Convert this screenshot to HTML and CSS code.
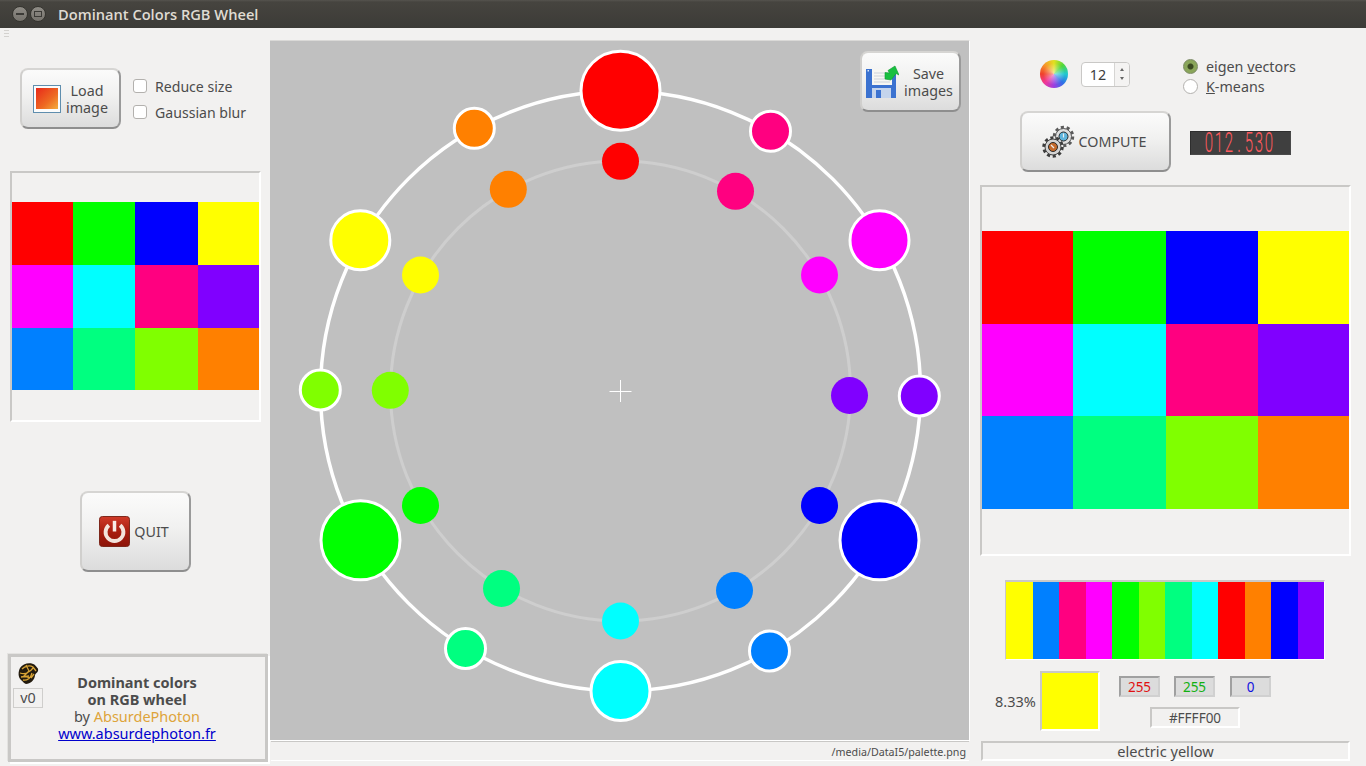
FILE: index.html
```html
<!DOCTYPE html>
<html lang="en">
<head>
<meta charset="utf-8">
<title>Dominant Colors RGB Wheel</title>
<link rel="stylesheet" href="styles.css">
</head>
<body>
<div class="app">
  <header class="titlebar">
    <span class="winbtn"><span class="glyph-min"></span></span>
    <span class="winbtn"><span class="glyph-max"></span></span>
    <span class="wintitle">Dominant Colors RGB Wheel</span>
  </header>
  <div class="grip"></div>
  <main class="main">
    <section class="left">
      <div class="load-row">
        <button class="btn btn-load">
          <svg class="ico-load" width="28" height="28" viewBox="0 0 28 28">
            <defs>
              <linearGradient id="lg" x1="0" y1="0" x2="1" y2="1"><stop offset="0" stop-color="#e8281a"/><stop offset=".6" stop-color="#ee6a22"/><stop offset="1" stop-color="#f4ae3c"/></linearGradient>
            </defs>
            <rect x=".5" y=".5" width="27" height="27" fill="#fbfbfb" stroke="#5f8eae"/>
            <rect x="3" y="3" width="22" height="21" fill="url(#lg)"/>
          </svg>
          <span class="btn-two">Load<br>image</span>
        </button>
        <div class="checks">
          <label class="check"><input type="checkbox"><span>Reduce size</span></label>
          <label class="check"><input type="checkbox"><span>Gaussian blur</span></label>
        </div>
      </div>
      <div class="frame frame-small">
        <div class="palette palette-small">
          <i class="red"></i><i class="green"></i><i class="blue"></i><i class="yellow"></i>
          <i class="magenta"></i><i class="cyan"></i><i class="rose"></i><i class="violet"></i>
          <i class="azure"></i><i class="spring"></i><i class="chart"></i><i class="orange"></i>
        </div>
      </div>
      <button class="btn btn-quit">
        <svg width="31" height="31" viewBox="0 0 32 32">
          <defs>
            <linearGradient id="qg" x1="0" y1="0" x2="0" y2="1"><stop offset="0" stop-color="#d03a28"/><stop offset=".5" stop-color="#a81e10"/><stop offset="1" stop-color="#8c1408"/></linearGradient>
          </defs>
          <rect x=".5" y=".5" width="31" height="31" rx="3" fill="url(#qg)" stroke="#7a2418"/>
          <path d="M10.200 9.500A9.200 9.200 0 1 0 21.800 9.500" fill="none" stroke="#f3e4dc" stroke-width="4"/>
          <path d="M16 5v11" stroke="#f8eee8" stroke-width="3.600"/>
        </svg>
        <span>QUIT</span>
      </button>
      <div class="about">
        <div class="badge">
          <svg width="22" height="24" viewBox="0 0 22 24">
            <path d="M3 6C6 1 14 0 18 3c1 2 4 3 3 6-1 2-2 2-3 4 0 5-5 9-9 9-3-1-3-3-5-4-3-3-3-8-1-12z" fill="#231b0e"/>
            <path d="M5 7c3-3 8-4 11-2l3 4M3 11c5 2 10-1 13-5M6 18c4 1 8-2 9-7M9 3l3 6-5 5 6 2M4 15l8-1M14 16l3-4" fill="none" stroke="#d9a435" stroke-width="1.300"/>
          </svg>
          <span class="version">v0</span>
        </div>
        <div class="about-text">
          <strong>Dominant colors<br>on RGB wheel</strong><br>
          by <span class="gold">AbsurdePhoton</span><br>
          <a href="#" class="site">www.absurdephoton.fr</a>
        </div>
      </div>
    </section>

    <section class="center">
      <div class="canvas">
        <svg class="wheel" width="700" height="699" viewBox="270 41 700 699">
          <circle class="ring-inner" cx="620.5" cy="391" r="230"/>
          <circle class="ring-outer" cx="620.5" cy="391" r="300"/>
          <path class="cross" d="M620.5 380v22M609.5 391.500h22"/>
          <g class="dots-outer">
            <circle class="s-red" cx="620.500" cy="90.700" r="39.500"/>
            <circle class="s-orange" cx="474.300" cy="128.300" r="20"/>
            <circle class="s-yellow" cx="360.300" cy="240.300" r="29.500"/>
            <circle class="s-chart" cx="320.300" cy="390" r="20"/>
            <circle class="s-green" cx="360.500" cy="540.300" r="39.500"/>
            <circle class="s-spring" cx="465.500" cy="648.500" r="20"/>
            <circle class="s-cyan" cx="620.500" cy="691" r="29.500"/>
            <circle class="s-azure" cx="769.500" cy="651" r="20"/>
            <circle class="s-blue" cx="879.500" cy="540.300" r="39.500"/>
            <circle class="s-violet" cx="919.300" cy="396" r="20"/>
            <circle class="s-magenta" cx="879.500" cy="240.300" r="29.500"/>
            <circle class="s-rose" cx="770.500" cy="131.300" r="20"/>
          </g>
          <g class="dots-inner">
            <circle class="s-red" cx="620.500" cy="161.300" r="18.500"/>
            <circle class="s-orange" cx="508.300" cy="189.300" r="18.500"/>
            <circle class="s-yellow" cx="420.500" cy="275" r="18.500"/>
            <circle class="s-chart" cx="390.300" cy="390.300" r="18.500"/>
            <circle class="s-green" cx="420.500" cy="505.500" r="18.500"/>
            <circle class="s-spring" cx="501.500" cy="588.500" r="18.500"/>
            <circle class="s-cyan" cx="620.500" cy="621" r="18.500"/>
            <circle class="s-azure" cx="734.500" cy="590.500" r="18.500"/>
            <circle class="s-blue" cx="819.500" cy="505.500" r="18.500"/>
            <circle class="s-violet" cx="849.500" cy="395.500" r="18.500"/>
            <circle class="s-magenta" cx="819.500" cy="275" r="18.500"/>
            <circle class="s-rose" cx="735.500" cy="191.300" r="18.500"/>
          </g>
        </svg>
        <button class="btn btn-save">
          <svg width="33" height="33" viewBox="0 0 33 33">
            <path d="M0 4h26l4 4v25H0z" fill="#3b72d0"/>
            <rect x="1.500" y="5" width="1.500" height="1.500" fill="#dbe8fa"/>
            <rect x="6" y="4" width="20" height="16" fill="#f6f6f2"/>
            <path d="M8 8h16M8 11h16M8 14h16M8 17h16" stroke="#ccd2da"/>
            <rect x="6" y="23" width="19" height="10" fill="#c4d4ec"/>
            <rect x="10" y="25" width="5" height="8" fill="#3b72d0"/>
            <path d="M19 14V7.500L23.500 8 22 5.500 29 1l4 9-3-1.500-1 1.500-4 5z" fill="#18c040" stroke="#0f9a30" stroke-width=".6"/>
          </svg>
          <span class="btn-two">Save<br>images</span>
        </button>
      </div>
      <div class="status">/media/DataI5/palette.png</div>
    </section>

    <section class="right">
      <div class="opts">
        <span class="colorwheel"></span>
        <div class="spin">
          <span class="spin-val">12</span>
          <span class="spin-arrows"><span class="up"></span><span class="down"></span></span>
        </div>
        <div class="radios">
          <label class="radio"><input type="radio" name="m" checked><span>eigen <u>v</u>ectors</span></label>
          <label class="radio"><input type="radio" name="m"><span><u>K</u>-means</span></label>
        </div>
      </div>
      <div class="compute-row">
        <button class="btn btn-compute">
          <svg width="33" height="33" viewBox="0 0 33 33">
            <g fill="none">
              <circle cx="21.500" cy="11.500" r="9" stroke="#5a5a5a" stroke-width="3.500" stroke-dasharray="3 2.650"/>
              <circle cx="21.500" cy="11.500" r="8" fill="#dedede" stroke="#555"/>
              <circle cx="21.500" cy="11.500" r="4.500" fill="#5fb4dc" stroke="#2a2a2a"/>
              <path d="M21.500 8.500v4" stroke="#eee" stroke-width="1.200"/>
              <circle cx="11" cy="22" r="9" stroke="#3c3c3c" stroke-width="3.500" stroke-dasharray="3 2.650"/>
              <circle cx="11" cy="22" r="8" fill="#d4d4d4" stroke="#444"/>
              <circle cx="11" cy="22" r="4.500" fill="#c46a2c" stroke="#2a2a2a"/>
              <path d="M9 20l3 3" stroke="#eee" stroke-width="1.200"/>
            </g>
          </svg>
          <span>COMPUTE</span>
        </button>
        <div class="lcd"><div class="lcd-digits"><b>0</b><b>1</b><b>2</b><b>.</b><b>5</b><b>3</b><b>0</b></div></div>
      </div>
      <div class="frame frame-large">
        <div class="palette palette-large">
          <i class="red"></i><i class="green"></i><i class="blue"></i><i class="yellow"></i>
          <i class="magenta"></i><i class="cyan"></i><i class="rose"></i><i class="violet"></i>
          <i class="azure"></i><i class="spring"></i><i class="chart"></i><i class="orange"></i>
        </div>
      </div>
      <div class="strip">
        <i class="yellow"></i><i class="azure"></i><i class="rose"></i><i class="magenta"></i>
        <i class="green"></i><i class="chart"></i><i class="spring"></i><i class="cyan"></i>
        <i class="red"></i><i class="orange"></i><i class="blue"></i><i class="violet"></i>
      </div>
      <div class="detail">
        <span class="pct">8.33%</span>
        <div class="swatch yellow"></div>
        <div class="values">
          <div class="rgb">
            <span class="val val-r">255</span>
            <span class="val val-g">255</span>
            <span class="val val-b">0</span>
          </div>
          <div class="hex">#FFFF00</div>
        </div>
      </div>
      <div class="name">electric yellow</div>
    </section>
  </main>
</div>
</body>
</html>
```
FILE: styles.css
```css
* { box-sizing: border-box; }
html, body { margin: 0; padding: 0; }
body {
  width: 1366px;
  height: 766px;
  overflow: hidden;
  background: #f2f1f0;
  color: #4c4c4c;
  font-family: "Noto Sans", "Open Sans", sans-serif;
  font-size: 14.300px;
}
.app { position: relative; width: 1366px; height: 766px; }

/* title bar */
.titlebar {
  height: 28px;
  display: flex;
  align-items: center;
  padding-left: 12px;
  gap: 2px;
  background: linear-gradient(#55534e 0, #46443f 2px, #3c3b37 100%);
}
.winbtn {
  width: 16px;
  height: 16px;
  border-radius: 50%;
  background: linear-gradient(#8f8c86, #76736d);
  border: 1px solid #35342f;
  display: flex;
  align-items: center;
  justify-content: center;
}
.glyph-min { width: 8px; height: 2px; background: #3c3b37; }
.glyph-max { width: 8px; height: 6px; border: 1px solid #3c3b37; }
.wintitle {
  margin-left: 10px;
  font-family: "Open Sans", sans-serif;
  font-size: 14.650px;
  font-weight: 600;
  color: #dfdbd2;
}
.grip {
  position: absolute;
  left: 4px;
  top: 30px;
  width: 5px;
  height: 8px;
  background: repeating-linear-gradient(#d4d2cf 0 1px, transparent 1px 3px);
}

.main {
  display: grid;
  grid-template-columns: 270px 700px 396px;
  height: 738px;
}

/* buttons */
.btn {
  display: flex;
  align-items: center;
  justify-content: center;
  padding: 0;
  font: inherit;
  color: #4c4c4c;
  background: linear-gradient(#fbfbfb, #f1f1f0 45%, #dcdcdc);
  border: 2px solid;
  border-color: #d6d5d3 #9a9a9a #8e8e8e #d0cfcd;
  border-radius: 8px;
}
.btn-two { text-align: center; line-height: 17px; }

/* left */
.load-row {
  display: flex;
  align-items: center;
  margin: 40px 0 0 20px;
}
.btn-load { width: 101px; height: 61px; gap: 5px; }
.checks {
  margin: 1px 0 0 12px;
  display: flex;
  flex-direction: column;
  gap: 6px;
  font-size: 14.100px;
}
.check { display: flex; align-items: center; height: 20px; gap: 8px; }
.check input {
  appearance: none;
  width: 14px;
  height: 14px;
  margin: 0;
  background: #fff;
  border: 1px solid #b3b1ae;
  border-radius: 3px;
}
.frame {
  display: flex;
  flex-direction: column;
  justify-content: center;
  padding-bottom: 2px;
  border: 2px solid;
  border-color: #c9c8c6 #fff #fff #c9c8c6;
}
.frame-small { width: 251px; height: 251px; margin: 42px 0 0 10px; }
.frame-large { width: 371px; height: 371px; margin: 13px 0 0 10px; }
.palette { display: grid; }
.palette i, .strip i { display: block; }
.palette-small {
  grid-template-columns: 61px 62px 63px 61px;
  grid-template-rows: 63px 63px 62px;
}
.palette-large {
  grid-template-columns: 91px 93px 92px 91px;
  grid-template-rows: 93px 92px 93px;
}
.btn-quit { width: 111px; height: 81px; margin: 69px 0 0 80px; gap: 4px; padding-right: 3px; }
.about {
  position: relative;
  width: 260px;
  height: 108px;
  margin: 82px 0 0 8px;
  padding-right: 2px;
  display: flex;
  align-items: center;
  justify-content: center;
  border: 3px solid #c9c8c6;
  box-shadow: 2px 2px 0 #fff, -1px -1px 0 #e4e3e1;
}
.about-text { text-align: center; line-height: 17px; font-size: 14.500px; }
.about-text strong { font-weight: 700; }
.gold { color: #dea43a; }
.site { color: #0000cc; }
.badge {
  position: absolute;
  left: 2px;
  top: 5px;
  width: 30px;
  display: flex;
  flex-direction: column;
  align-items: center;
}
.version {
  width: 30px;
  height: 20px;
  margin-top: 2px;
  border: 1px solid #cfcecc;
  text-align: center;
  line-height: 18px;
}

/* center */
.canvas {
  position: relative;
  width: 700px;
  height: 701px;
  margin-top: 12px;
  background: #c0c0c0;
  border-top: 1px solid #dad9d7;
  border-right: 1px solid #fff;
  border-bottom: 1px solid #fff;
}
.wheel { display: block; }
.ring-inner { fill: none; stroke: #cecece; stroke-width: 3; }
.ring-outer { fill: none; stroke: #fff; stroke-width: 3.500; }
.cross { stroke: #fff; stroke-width: 1; fill: none; }
.dots-outer circle { stroke: #fff; stroke-width: 3; }
.btn-save {
  position: absolute;
  left: 590px;
  top: 10px;
  width: 101px;
  height: 61px;
  gap: 5px;
  padding-right: 2px;
}
.status {
  width: 698px;
  height: 20px;
  margin-left: 1px;
  padding-right: 3px;
  text-align: right;
  font-size: 10.700px;
  line-height: 21px;
  border-top: 1px solid #c9c8c6;
  border-bottom: 1px solid #fff;
}

/* right */
.opts {
  display: flex;
  align-items: center;
  height: 40px;
  margin-top: 26px;
  padding-left: 70px;
}
.colorwheel {
  width: 28px;
  height: 28px;
  border-radius: 50%;
  background:
    radial-gradient(circle at 50% 50%, rgba(255,255,255,.55) 0, rgba(255,255,255,0) 55%),
    conic-gradient(#e2e020, #50d83a, #20c8d0, #2f70e8, #9a3ee0, #f0389a, #f0402a, #f6982c, #e2e020);
}
.spin {
  display: flex;
  width: 49px;
  height: 25px;
  margin-left: 13px;
  background: #fff;
  border: 1px solid #c9c8c6;
  border-radius: 4px;
}
.spin-val { flex: 1; text-align: center; line-height: 23px; color: #3c3c3c; }
.spin-arrows {
  width: 15px;
  display: flex;
  flex-direction: column;
  justify-content: center;
  align-items: center;
  gap: 6px;
  background: #f4f3f2;
  border-left: 1px solid #d6d5d3;
  border-radius: 0 4px 4px 0;
}
.up { border: 2px solid transparent; border-top: 0; border-bottom: 3px solid #666; }
.down { border: 2px solid transparent; border-bottom: 0; border-top: 3px solid #666; }
.radios {
  margin: 4px 0 0 53px;
  display: flex;
  flex-direction: column;
}
.radio { display: flex; align-items: center; height: 20px; gap: 8px; }
.radio input {
  appearance: none;
  width: 15px;
  height: 15px;
  margin: 0;
  background: #fff;
  border: 1px solid #b3b1ae;
  border-radius: 50%;
}
.radio input:checked {
  background: radial-gradient(circle, #3b4a22 0 2.500px, #8aa65a 3.500px);
  border-color: #7b8a63;
}
.compute-row {
  display: flex;
  align-items: center;
  margin: 17px 0 0 50px;
}
.btn-compute { width: 151px; height: 61px; gap: 4px; padding-right: 3px; }
.lcd {
  width: 101px;
  height: 24px;
  margin: 3px 0 0 19px;
  padding-left: 13px;
  background: #3f3f3f;
  border: 1px solid;
  border-color: #2e2e2e #4a4a4a #4a4a4a #2e2e2e;
  display: flex;
  align-items: center;
}
.lcd-digits {
  display: flex;
  font-family: "Roboto", sans-serif;
  font-size: 15px;
  line-height: 12px;
  color: #ff5a5e;
  transform: scaleY(1.800);
}
.lcd-digits b {
  width: 10px;
  font-weight: 300;
  text-align: center;
}
.strip {
  display: grid;
  grid-template-columns: repeat(12, 1fr);
  width: 320px;
  height: 80px;
  margin: 24px 0 0 35px;
  border: 1px solid;
  border-width: 2px 1px 1px 1px;
  border-color: #c9c8c6 #fff #fff #c9c8c6;
}
.detail {
  display: flex;
  align-items: flex-start;
  margin: 11px 0 0 25px;
}
.pct { width: 45px; line-height: 60px; font-size: 14.500px; }
.swatch {
  width: 60px;
  height: 60px;
  border: 2px solid;
  border-color: #c9c8c6 #fff #fff #c9c8c6;
}
.values { margin: 5px 0 0 19px; }
.rgb { display: flex; gap: 14px; }
.val {
  width: 41px;
  height: 21px;
  text-align: center;
  font-size: 13.500px;
  line-height: 18px;
  background: #dcdcdc;
  border: 2px solid;
  border-color: #a0a0a0 #d0d0d0 #d0d0d0 #a0a0a0;
}
.val-r { color: #e01010; }
.val-g { color: #12b012; margin-right: 1px; }
.val-b { color: #1010e0; }
.hex {
  width: 90px;
  height: 21px;
  margin: 10px 0 0 31px;
  text-align: center;
  line-height: 18px;
  font-size: 13.500px;
  border: 2px solid;
  border-color: #c9c8c6 #fff #fff #c9c8c6;
}
.name {
  width: 369px;
  height: 20px;
  margin: 10px 0 0 11px;
  text-align: center;
  font-size: 14.600px;
  line-height: 17px;
  border: 2px solid;
  border-color: #c9c8c6 #fff #fff #c9c8c6;
}

/* colours */
.red { background: #ff0000; }
.green { background: #00ff00; }
.blue { background: #0000ff; }
.yellow { background-color: #ffff00; }
.magenta { background: #ff00ff; }
.cyan { background: #00ffff; }
.rose { background: #ff0080; }
.violet { background: #8000ff; }
.azure { background: #0080ff; }
.spring { background: #00ff80; }
.chart { background: #80ff00; }
.orange { background: #ff8000; }
.s-red { fill: #ff0000; }
.s-green { fill: #00ff00; }
.s-blue { fill: #0000ff; }
.s-yellow { fill: #ffff00; }
.s-magenta { fill: #ff00ff; }
.s-cyan { fill: #00ffff; }
.s-rose { fill: #ff0080; }
.s-violet { fill: #8000ff; }
.s-azure { fill: #0080ff; }
.s-spring { fill: #00ff80; }
.s-chart { fill: #80ff00; }
.s-orange { fill: #ff8000; }
```
